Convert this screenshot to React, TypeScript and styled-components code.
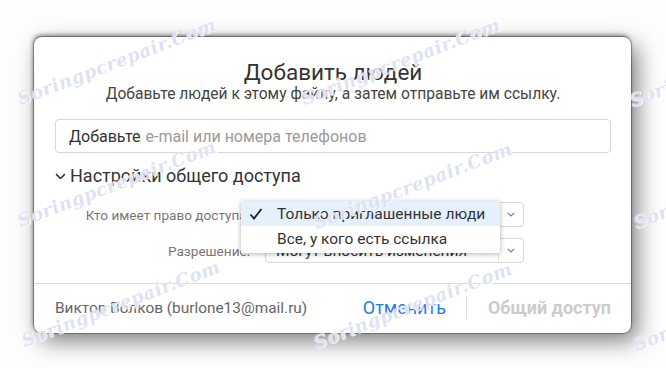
import React from "react";
import styled, { createGlobalStyle } from "styled-components";

const Global = createGlobalStyle`
  html, body {
    margin: 0;
    padding: 0;
    background: #fdfdfd;
  }
  body {
    font-family: Roboto, "Liberation Sans", sans-serif;
  }
`;

const Page = styled.div`
  position: relative;
  width: 666px;
  height: 368px;
  overflow: hidden;
  padding: 37px 0 0 34px;
  box-sizing: border-box;
`;

const Dialog = styled.div`
  width: 597px;
  height: 296px;
  background: #fff;
  border-radius: 8px;
  box-shadow: 0 0 0 1px rgba(0, 0, 0, 0.25), -1px -2px 4px rgba(0, 0, 0, 0.45),
    6px 8px 22px rgba(0, 0, 0, 0.5);
  display: flex;
  flex-direction: column;
  box-sizing: border-box;
`;

const Body = styled.div`
  padding: 22px 20px 0 21px;
  display: flex;
  flex-direction: column;
  flex: 1;
`;

const Title = styled.div`
  text-align: center;
  font-size: 22.5px;
  line-height: 26px;
  color: #333;
`;

const Subtitle = styled.div`
  text-align: center;
  font-size: 15.6px;
  line-height: 18px;
  color: #444;
`;

const Input = styled.div`
  margin-top: 16px;
  height: 34px;
  border: 1px solid #d7d7d7;
  border-radius: 4px;
  box-sizing: border-box;
  display: flex;
  align-items: center;
  padding-left: 13px;
  font-size: 16px;
  color: #9a9a9a;
`;

const Strong = styled.span`
  color: #333;
  margin-right: 5px;
`;

const Section = styled.div`
  margin-top: 12px;
  display: flex;
  align-items: center;
  gap: 4px;
  font-size: 18px;
  line-height: 22px;
  color: #333;
`;

const Rows = styled.div`
  margin-top: 15px;
  display: flex;
  flex-direction: column;
  gap: 11px;
`;

const Row = styled.div`
  display: flex;
  align-items: center;
  gap: 15px;
`;

const Label = styled.div`
  width: 195px;
  text-align: right;
  font-size: 13.6px;
  color: #777;
  white-space: nowrap;
`;

const Select = styled.div`
  position: relative;
  width: 259px;
  height: 25px;
  border: 1px solid #d8d8d8;
  border-radius: 4px;
  box-sizing: border-box;
  display: flex;
  align-items: center;
  font-size: 15.5px;
  color: #333;
`;

const SelectText = styled.div`
  flex: 1;
  padding-left: 10px;
  white-space: nowrap;
  overflow: hidden;
`;

const Caret = styled.div`
  width: 24px;
  height: 100%;
  border-left: 1px solid #e2e2e2;
  display: flex;
  align-items: center;
  justify-content: center;
`;

const Popup = styled.div`
  position: absolute;
  left: -25px;
  top: -2px;
  width: 259px;
  background: #fff;
  box-shadow: 0 1px 5px rgba(0, 0, 0, 0.3);
  z-index: 2;
  padding-bottom: 2px;
`;

const Item = styled.div<{ $active?: boolean }>`
  height: 25px;
  display: flex;
  align-items: center;
  background: ${(p) => (p.$active ? "#e4f0fb" : "#fff")};
  font-size: 15.5px;
  color: #333;
  white-space: nowrap;
`;

const Check = styled.div`
  width: 36px;
  display: flex;
  justify-content: flex-start;
  padding-left: 8px;
  box-sizing: border-box;
`;

const Footer = styled.div`
  height: 47px;
  border-top: 1px solid #dcdcdc;
  display: flex;
  align-items: center;
  padding: 0 20px 2px 21px;
  font-size: 15.4px;
`;

const Owner = styled.div`
  flex: 1;
  color: #666;
`;

const Cancel = styled.div`
  color: #1a7ce6;
  font-size: 18px;
  padding-right: 20px;
`;

const Sep = styled.div`
  width: 1px;
  height: 23px;
  background: #e0e0e0;
  margin-right: 21px;
`;

const Share = styled.div`
  color: #cccccc;
  font-weight: 700;
  font-size: 18px;
`;

const Mark = styled.div`
  position: absolute;
  pointer-events: none;
  font-family: "DejaVu Serif", serif;
  font-style: italic;
  font-weight: 700;
  font-size: 18px;
  letter-spacing: 0.5px;
  color: rgba(175, 185, 230, 0.42);
  text-shadow: 0 0 1px #fff, 1px 1px 0 rgba(255, 255, 255, 0.8);
  transform: rotate(-21deg);
  transform-origin: left bottom;
  white-space: nowrap;
  z-index: 5;
`;

const Chevron = ({ size = 10, color = "#555" }: { size?: number; color?: string }) => (
  <svg width={size} height={size * 0.6} viewBox="0 0 10 6">
    <path d="M1 1 L5 5 L9 1" fill="none" stroke={color} strokeWidth="1.4" />
  </svg>
);

const marks = [
  [22, 88], [306, 88], [634, 90],
  [22, 210], [318, 212], [638, 212],
  [26, 330], [318, 332], [638, 334],
];

export default function App() {
  return (
    <>
      <Global />
      <Page>
        <Dialog>
          <Body>
            <Title>Добавить людей</Title>
            <Subtitle>Добавьте людей к этому файлу, а затем отправьте им ссылку.</Subtitle>
            <Input>
              <Strong>Добавьте</Strong>e-mail или номера телефонов
            </Input>
            <Section>
              <Chevron size={11} color="#333" />
              Настройки общего доступа
            </Section>
            <Rows>
              <Row>
                <Label>Кто имеет право доступа:</Label>
                <Select>
                  <SelectText>Только приглашенные люди</SelectText>
                  <Caret>
                    <Chevron size={8} color="#777" />
                  </Caret>
                  <Popup>
                    <Item $active>
                      <Check>
                        <svg width="14" height="12" viewBox="0 0 14 12">
                          <path d="M1.5 6.5 L5 10.5 L12.5 1" fill="none" stroke="#222" strokeWidth="1.8" />
                        </svg>
                      </Check>
                      Только приглашенные люди
                    </Item>
                    <Item>
                      <Check />
                      Все, у кого есть ссылка
                    </Item>
                  </Popup>
                </Select>
              </Row>
              <Row>
                <Label>Разрешение:</Label>
                <Select>
                  <SelectText>Могут вносить изменения</SelectText>
                  <Caret>
                    <Chevron size={8} color="#777" />
                  </Caret>
                </Select>
              </Row>
            </Rows>
          </Body>
          <Footer>
            <Owner>Виктор Волков (burlone13@mail.ru)</Owner>
            <Cancel>Отменить</Cancel>
            <Sep />
            <Share>Общий доступ</Share>
          </Footer>
        </Dialog>
        {marks.map(([x, y], i) => (
          <Mark key={i} style={{ left: x, top: y }}>
            Soringpcrepair.Com
          </Mark>
        ))}
      </Page>
    </>
  );
}
